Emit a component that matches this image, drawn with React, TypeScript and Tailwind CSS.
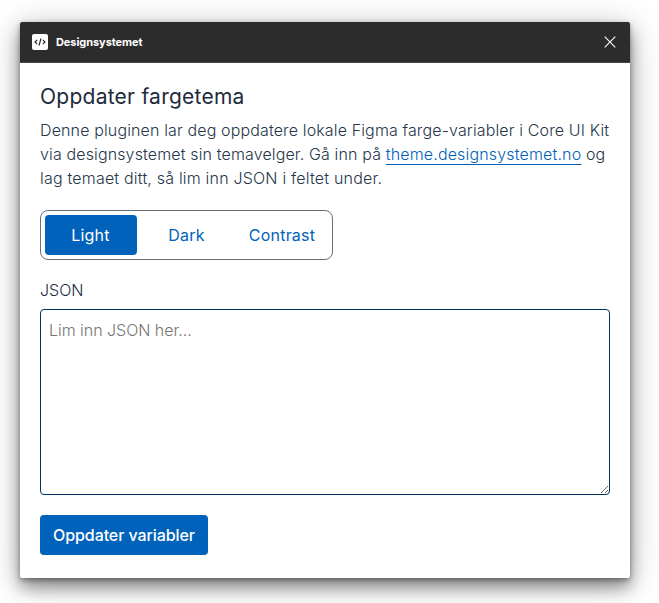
import React, { useState } from "react";

const themes = [
  { name: "Light", width: "w-[92px]" },
  { name: "Dark", width: "w-[80px]" },
  { name: "Contrast", width: "w-[91px]" },
];

function TitleBar() {
  return (
    <header className="flex h-[41px] shrink-0 items-center border-b border-[#444444] bg-[#2c2c2c] pl-3 pr-[13px] text-white">
      <svg width="16" height="16" viewBox="0 0 16 16" aria-hidden="true">
        <rect width="16" height="16" rx="2" fill="#fff" />
        <path d="M5.2 5.8 3 8l2.2 2.2M10.8 5.8 13 8l-2.2 2.2M9 4.5 7 11.5" fill="none" stroke="#222" strokeWidth="1.1" />
      </svg>
      <h1 className="ml-2 text-[11px] font-bold leading-4 tracking-[-0.07px]">Designsystemet</h1>
      <button type="button" aria-label="Lukk" className="ml-auto">
        <svg width="14" height="14" viewBox="0 0 14 14" fill="none" stroke="#fff" strokeWidth="1.1">
          <path d="m1.7 1.7 10.6 10.6M12.3 1.7 1.7 12.3" />
        </svg>
      </button>
    </header>
  );
}

export default function App() {
  const [active, setActive] = useState("Light");
  return (
    <div className="h-[603px] w-[659px] overflow-hidden bg-white pl-5 pt-[22px] font-['Inter',sans-serif]">
      <main className="flex h-[556px] w-[610px] flex-col overflow-hidden rounded-[2px] bg-white shadow-[0_10px_16px_rgba(0,0,0,0.35),0_2px_5px_rgba(0,0,0,0.35),0_5px_34px_rgba(0,0,0,0.26)]">
        <TitleBar />
        <div className="flex flex-col items-start px-5 pt-5">
          <h2 className="text-[21px] font-[380] leading-7 tracking-[0.25px] text-[#1e2b3c]">Oppdater fargetema</h2>
          <p className="mt-[7px] whitespace-nowrap text-[16px] font-light leading-6 tracking-[0.135px] text-[#26364a]">
            Denne pluginen lar deg oppdatere lokale Figma farge-variabler i Core UI Kit
            <br />
            via designsystemet sin temavelger. Gå inn på{" "}
            <a href="#" className="tracking-[0.16px] text-[#0062ba] underline decoration-1 underline-offset-[4px] [text-decoration-skip-ink:none]">theme.designsystemet.no</a> og
            <br />
            <span className="tracking-[0.195px]">lag temaet ditt, så lim inn JSON i feltet under.</span>
          </p>
          <div className="mt-5 flex h-[50px] w-[293px] gap-[10px] rounded-lg border border-[#68707c] p-1">
            {themes.map((theme) => (
              <button
                key={theme.name}
                type="button"
                onClick={() => setActive(theme.name)}
                className={`h-10 rounded pr-px text-[16px] tracking-[0.2px] ${theme.width} ${active === theme.name ? "bg-[#0062ba] font-normal text-white" : "font-[370] text-[#0062ba]"}`}
              >
                {theme.name}
              </button>
            ))}
          </div>
          <label htmlFor="json" className="mt-[18px] text-[16px] font-[360] leading-6 text-[#1e2b3c]">JSON</label>
          <textarea
            id="json"
            placeholder="Lim inn JSON her..."
            className="mt-[7px] block h-[186px] w-[570px] resize rounded border border-[#003562] px-2 py-2 text-[16px] font-[350] leading-6 tracking-[-0.03px] placeholder:text-[#757575]"
          />
          <button type="button" className="mt-5 h-10 w-[168px] rounded bg-[#0062ba] text-[16px] font-medium tracking-[-0.08px] text-white">
            Oppdater variabler
          </button>
        </div>
      </main>
    </div>
  );
}
